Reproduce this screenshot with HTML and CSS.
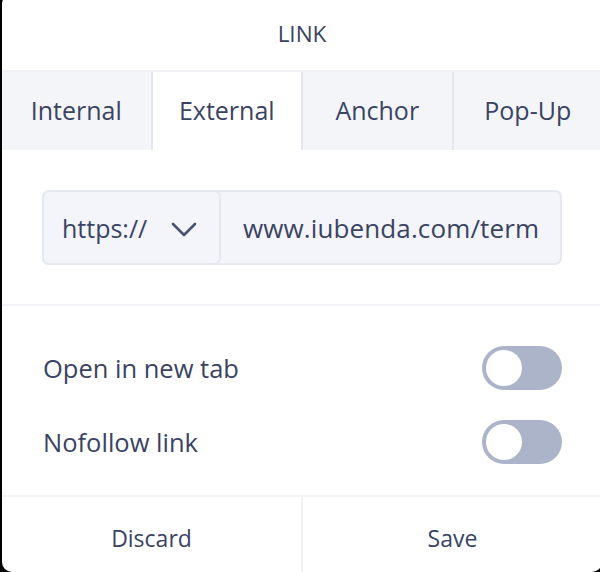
FILE: index.html
```html
<!DOCTYPE html>
<html lang="en">
  <head>
    <meta charset="UTF-8" />
    <meta name="viewport" content="width=device-width, initial-scale=1.0" />
    <title>Link</title>
    <link rel="stylesheet" href="styles.css">
  </head>

  <body>
    <div class="link-dialog">
      <header>
        <h2>LINK</h2>
      </header>

      <nav class="tabs">
        <button class="tab">Internal</button>
        <button class="tab active">External</button>
        <button class="tab">Anchor</button>
        <button class="tab">Pop-Up</button>
      </nav>

      <section class="url-section">
        <div class="url-group">
          <div class="protocol">
            <span>https://</span>
            <svg class="chevron" width="26" height="15" viewBox="0 0 26 15">
              <path d="M2 2 L13 13 L24 2" fill="none" stroke="#48526e" stroke-width="2.6" stroke-linecap="round" stroke-linejoin="round" />
            </svg>
          </div>
          <input type="text" id="url" value="www.iubenda.com/terms-and-conditions" />
        </div>
      </section>

      <section class="options">
        <label class="option">
          <span>Open in new tab</span>
          <input type="checkbox" class="toggle" />
        </label>
        <label class="option">
          <span>Nofollow link</span>
          <input type="checkbox" class="toggle" />
        </label>
      </section>

      <footer>
        <button id="discard-button">Discard</button>
        <button id="save-button">Save</button>
      </footer>
    </div>
  </body>
</html>
```

FILE: styles.css
```css
html,
body {
  margin: 0;
  padding: 0;
  height: 100%;
  background: #000;
  overflow: hidden;
}

button,
input {
  margin: 0;
  padding: 0;
  border: 0;
  background: none;
  font-family: inherit;
  font-size: 100%;
  color: inherit;
  -webkit-appearance: none;
  appearance: none;
}

.link-dialog {
  box-sizing: border-box;
  width: 600px;
  height: 578px;
  margin: -6px 0 0 2px;
  border-radius: 10px;
  background-color: #fff;
  display: flex;
  flex-flow: column;
  font-family: "Open Sans", "Noto Sans", sans-serif;
  color: rgb(58, 68, 98);
  overflow: hidden;
}

header {
  height: 76px;
  display: flex;
  align-items: center;
  justify-content: center;
}

header h2 {
  margin: 0;
  font-size: 22.5px;
  font-weight: 400;
  padding-top: 3px;
}

.tabs {
  display: flex;
  height: 80px;
  box-sizing: border-box;
  border-top: 2px solid rgb(240, 241, 246);
  background-color: rgb(244, 245, 249);
}

.tabs .tab {
  flex: 1;
  font-size: 25px;
  padding-bottom: 2px;
  cursor: pointer;
  border-right: 2px solid rgb(228, 230, 239);
}
.tabs .tab:last-child {
  border-right: none;
}
.tabs .tab.active {
  background-color: #fff;
}

.url-section {
  padding: 40px 40px 39px 40px;
  border-bottom: 2px solid rgb(242, 243, 247);
}

.url-group {
  box-sizing: border-box;
  display: flex;
  height: 75px;
  border: 2px solid rgb(230, 232, 241);
  border-radius: 7px;
  background-color: rgb(244, 245, 250);
}

.protocol {
  box-sizing: border-box;
  width: 179px;
  margin: -2px 0 -2px -2px;
  padding: 0 22px 0 18px;
  display: flex;
  align-items: center;
  justify-content: space-between;
  border: 2px solid rgb(230, 232, 241);
  border-radius: 7px;
  font-size: 25px;
  flex-shrink: 0;
}

.protocol .chevron {
  margin-top: 4px;
}

.url-group input {
  flex: 1;
  min-width: 0;
  padding: 0 22px 0 22px;
  font-size: 26px;
  letter-spacing: 0.12px;
}
.url-group input:focus {
  outline: none;
}

.options {
  flex: 1;
  padding: 40px 40px 0 41px;
  display: flex;
  flex-flow: column;
  gap: 30px;
  border-bottom: 2px solid rgb(242, 243, 247);
}

.option {
  display: flex;
  align-items: center;
  justify-content: space-between;
  font-size: 25.5px;
  cursor: pointer;
}

.toggle {
  position: relative;
  width: 80px;
  height: 44px;
  border-radius: 22px;
  background-color: rgb(171, 180, 201);
  cursor: pointer;
  transition: background-color 300ms ease;
}
.toggle::after {
  content: "";
  position: absolute;
  top: 4px;
  left: 4px;
  width: 36px;
  height: 36px;
  border-radius: 50%;
  background-color: #fff;
  transition: left 300ms ease;
}
.toggle:checked {
  background-color: rgb(31, 185, 127);
}
.toggle:checked::after {
  left: 40px;
}

footer {
  height: 75px;
  display: flex;
}

footer button {
  flex: 1;
  font-size: 23px;
  padding-top: 6px;
  cursor: pointer;
}
footer button:first-child {
  border-right: 2px solid rgb(242, 243, 247);
}
```
